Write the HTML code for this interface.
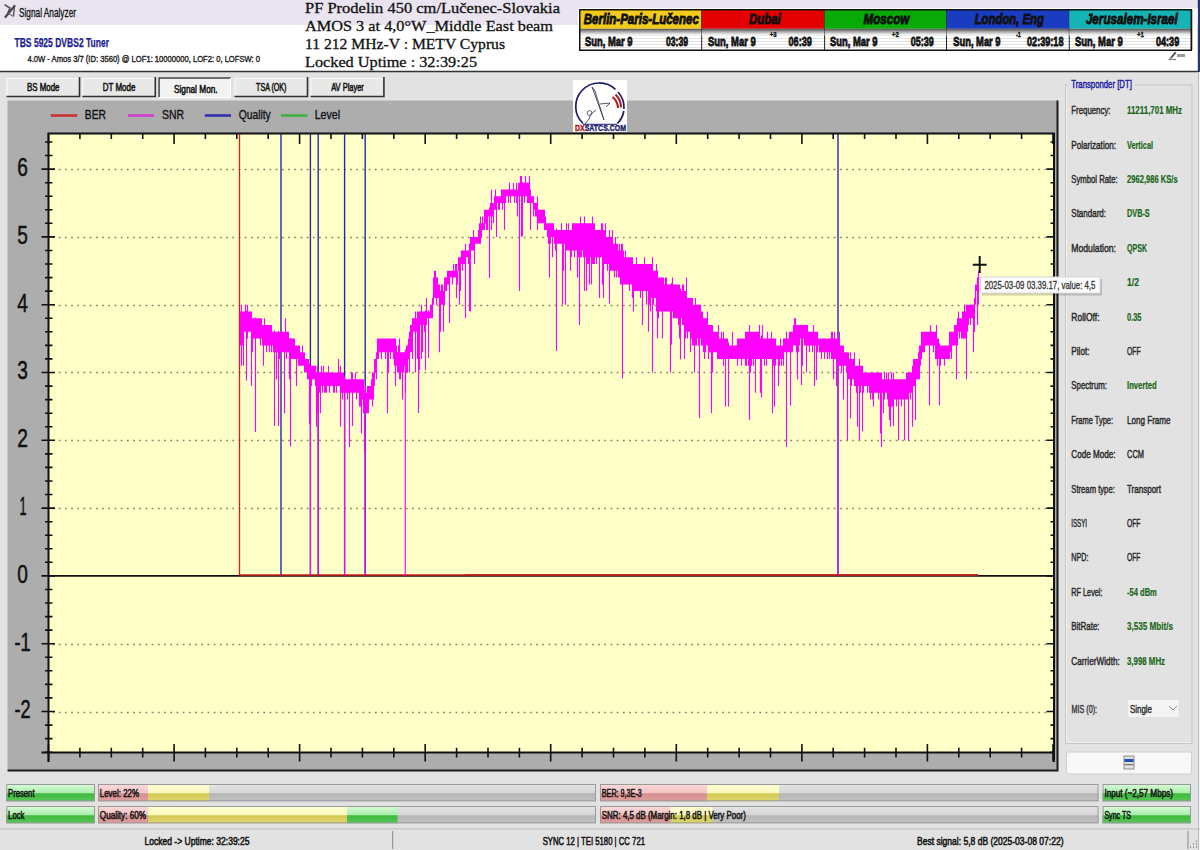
<!DOCTYPE html>
<html><head><meta charset="utf-8"><title>Signal Analyzer</title>
<style>html,body{margin:0;padding:0;width:1200px;height:850px;overflow:hidden;background:#e6e6e6;} svg{display:block;}</style>
</head><body>
<svg width="1200" height="850" viewBox="0 0 1200 850"><defs>
<linearGradient id="gGreen" x1="0" y1="0" x2="0" y2="1">
 <stop offset="0" stop-color="#dcfcdc"/><stop offset="0.52" stop-color="#a8eca8"/>
 <stop offset="0.56" stop-color="#40b840"/><stop offset="1" stop-color="#58c858"/></linearGradient>
<linearGradient id="gGray" x1="0" y1="0" x2="0" y2="1">
 <stop offset="0" stop-color="#e4e4e4"/><stop offset="0.52" stop-color="#d6d6d6"/>
 <stop offset="0.56" stop-color="#b6b6b6"/><stop offset="1" stop-color="#c2c2c2"/></linearGradient>
<linearGradient id="gRed" x1="0" y1="0" x2="0" y2="1">
 <stop offset="0" stop-color="#fcdcdc"/><stop offset="0.52" stop-color="#f2c2c2"/>
 <stop offset="0.56" stop-color="#d68e8e"/><stop offset="1" stop-color="#dea0a0"/></linearGradient>
<linearGradient id="gYel" x1="0" y1="0" x2="0" y2="1">
 <stop offset="0" stop-color="#ffffd4"/><stop offset="0.52" stop-color="#fbf8bc"/>
 <stop offset="0.56" stop-color="#d2c852"/><stop offset="1" stop-color="#e0d870"/></linearGradient>
<linearGradient id="gLGreen" x1="0" y1="0" x2="0" y2="1">
 <stop offset="0" stop-color="#dcfcdc"/><stop offset="0.52" stop-color="#a8eca8"/>
 <stop offset="0.56" stop-color="#40b840"/><stop offset="1" stop-color="#58c858"/></linearGradient>
<linearGradient id="gClock" x1="0" y1="0" x2="0" y2="1">
 <stop offset="0" stop-color="#505050"/><stop offset="0.35" stop-color="#9a9a9a"/>
 <stop offset="0.75" stop-color="#e6e6e6"/><stop offset="1" stop-color="#f8f8f8"/></linearGradient>
<pattern id="pStripe" width="4" height="3" patternUnits="userSpaceOnUse">
 <rect width="4" height="3" fill="#ffffff"/><rect y="2" width="4" height="1" fill="#e4e4e4"/></pattern>
</defs>
<rect x="0" y="0" width="1200" height="850" fill="#e2e2e2" />
<rect x="0" y="0" width="1200" height="25" fill="#e9e4f0" />
<rect x="0" y="25" width="1200" height="46" fill="#ffffff" />
<line x1="0" y1="71.5" x2="1200" y2="71.5" stroke="#333" stroke-width="1.5" />
<line x1="1198.5" y1="25" x2="1198.5" y2="850" stroke="#b4bccc" stroke-width="1" />
<rect x="1199" y="0" width="1" height="850" fill="#f4f4f8" />
<rect x="1197.8" y="0" width="2.2" height="72" fill="#2a3470" />
<rect x="1192" y="8" width="5.8" height="17" fill="#f6f4fa" />
<g fill="none" stroke="#555" stroke-linecap="round"><path d="M5 5 L10 8 L7 15" stroke-width="1.6"/><path d="M14.5 5.5 L13.5 16" stroke-width="1.4"/><path d="M5.5 17 L14.5 6" stroke-width="2.2" stroke="#4a4a4a"/><path d="M9 14 L13 16" stroke-width="1.2" stroke="#777"/></g>
<text x="19.00" y="16.5" font-size="12.5" font-weight="normal" font-style="normal" fill="#111" stroke="#111" stroke-width="0.3" font-family='"Liberation Sans", sans-serif' textLength="56.99" lengthAdjust="spacingAndGlyphs" >Signal Analyzer</text>
<text x="14.50" y="47.0" font-size="12" font-weight="bold" font-style="normal" fill="#1c1c90" stroke="#1c1c90" stroke-width="0.25" font-family='"Liberation Sans", sans-serif' textLength="94.51" lengthAdjust="spacingAndGlyphs" >TBS 5925 DVBS2 Tuner</text>
<text x="27.50" y="62.3" font-size="9.5" font-weight="normal" font-style="normal" fill="#222" stroke="#222" stroke-width="0.4" font-family='"Liberation Sans", sans-serif' textLength="232.51" lengthAdjust="spacingAndGlyphs" >4.0W - Amos 3/7 (ID: 3560) @ LOF1: 10000000, LOF2: 0, LOFSW: 0</text>
<text x="305.00" y="12.8" font-size="15" font-weight="normal" font-style="normal" fill="#111" stroke="#111" stroke-width="0.3" font-family='"Liberation Serif", serif' textLength="254.99" lengthAdjust="spacingAndGlyphs" >PF Prodelin 450 cm/Lučenec-Slovakia</text>
<text x="305.00" y="31.0" font-size="15" font-weight="normal" font-style="normal" fill="#111" stroke="#111" stroke-width="0.3" font-family='"Liberation Serif", serif' textLength="248.01" lengthAdjust="spacingAndGlyphs" >AMOS 3 at 4,0°W_Middle East beam</text>
<text x="305.00" y="49.3" font-size="15" font-weight="normal" font-style="normal" fill="#111" stroke="#111" stroke-width="0.3" font-family='"Liberation Serif", serif' textLength="200.04" lengthAdjust="spacingAndGlyphs" >11 212 MHz-V : METV Cyprus</text>
<text x="305.00" y="67.2" font-size="15" font-weight="normal" font-style="normal" fill="#111" stroke="#111" stroke-width="0.3" font-family='"Liberation Serif", serif' textLength="172.02" lengthAdjust="spacingAndGlyphs" >Locked Uptime : 32:39:25</text>
<rect x="578" y="8" width="615" height="43.5" fill="#ffffff" />
<rect x="579" y="9" width="613" height="41.5" fill="url(#pStripe)" />
<rect x="579.0" y="10" width="122.70000000000005" height="18.8" fill="#f2cc1c" />
<rect x="579.0" y="28.8" width="122.70000000000005" height="7" fill="url(#gClock)" />
<text x="583.80" y="23.5" font-size="14.5" font-weight="bold" font-style="italic" fill="#111" stroke="#111" stroke-width="0.9" font-family='"Liberation Sans", sans-serif' textLength="114.98" lengthAdjust="spacingAndGlyphs" >Berlin-Paris-Lučenec</text>
<text x="585.00" y="45.8" font-size="13.5" font-weight="bold" font-style="normal" fill="#111" stroke="#111" stroke-width="0.8" font-family='"Liberation Sans", sans-serif' textLength="47.52" lengthAdjust="spacingAndGlyphs" >Sun, Mar 9</text>
<text x="666.00" y="45.8" font-size="13.5" font-weight="bold" font-style="normal" fill="#111" stroke="#111" stroke-width="0.8" font-family='"Liberation Sans", sans-serif' textLength="21.98" lengthAdjust="spacingAndGlyphs" >03:39</text>
<line x1="701.7" y1="9.5" x2="701.7" y2="50" stroke="#222" stroke-width="1" />
<rect x="701.7" y="10" width="122.89999999999998" height="18.8" fill="#e40000" />
<rect x="701.7" y="28.8" width="122.89999999999998" height="7" fill="url(#gClock)" />
<text x="749.00" y="23.5" font-size="14.5" font-weight="bold" font-style="italic" fill="#111" stroke="#111" stroke-width="0.9" font-family='"Liberation Sans", sans-serif' textLength="31.80" lengthAdjust="spacingAndGlyphs" >Dubai</text>
<text x="708.00" y="45.8" font-size="13.5" font-weight="bold" font-style="normal" fill="#111" stroke="#111" stroke-width="0.8" font-family='"Liberation Sans", sans-serif' textLength="47.82" lengthAdjust="spacingAndGlyphs" >Sun, Mar 9</text>
<text x="788.50" y="45.8" font-size="13.5" font-weight="bold" font-style="normal" fill="#111" stroke="#111" stroke-width="0.8" font-family='"Liberation Sans", sans-serif' textLength="23.38" lengthAdjust="spacingAndGlyphs" >06:39</text>
<text x="769.80" y="37.0" font-size="8" font-weight="bold" font-style="normal" fill="#111" stroke="#111" stroke-width="0.4" font-family='"Liberation Sans", sans-serif' textLength="6.90" lengthAdjust="spacingAndGlyphs" >+3</text>
<line x1="824.6" y1="9.5" x2="824.6" y2="50" stroke="#222" stroke-width="1" />
<rect x="824.6" y="10" width="121.89999999999998" height="18.8" fill="#08aa08" />
<rect x="824.6" y="28.8" width="121.89999999999998" height="7" fill="url(#gClock)" />
<text x="863.50" y="23.5" font-size="14.5" font-weight="bold" font-style="italic" fill="#111" stroke="#111" stroke-width="0.9" font-family='"Liberation Sans", sans-serif' textLength="45.86" lengthAdjust="spacingAndGlyphs" >Moscow</text>
<text x="830.00" y="45.8" font-size="13.5" font-weight="bold" font-style="normal" fill="#111" stroke="#111" stroke-width="0.8" font-family='"Liberation Sans", sans-serif' textLength="47.52" lengthAdjust="spacingAndGlyphs" >Sun, Mar 9</text>
<text x="910.80" y="45.8" font-size="13.5" font-weight="bold" font-style="normal" fill="#111" stroke="#111" stroke-width="0.8" font-family='"Liberation Sans", sans-serif' textLength="22.98" lengthAdjust="spacingAndGlyphs" >05:39</text>
<text x="891.70" y="37.0" font-size="8" font-weight="bold" font-style="normal" fill="#111" stroke="#111" stroke-width="0.4" font-family='"Liberation Sans", sans-serif' textLength="7.30" lengthAdjust="spacingAndGlyphs" >+2</text>
<line x1="946.5" y1="9.5" x2="946.5" y2="50" stroke="#222" stroke-width="1" />
<rect x="946.5" y="10" width="122.79999999999995" height="18.8" fill="#1a3cc0" />
<rect x="946.5" y="28.8" width="122.79999999999995" height="7" fill="url(#gClock)" />
<text x="974.70" y="23.5" font-size="14.5" font-weight="bold" font-style="italic" fill="#111" stroke="#111" stroke-width="0.9" font-family='"Liberation Sans", sans-serif' textLength="69.29" lengthAdjust="spacingAndGlyphs" >London, Eng</text>
<text x="953.30" y="45.8" font-size="13.5" font-weight="bold" font-style="normal" fill="#111" stroke="#111" stroke-width="0.8" font-family='"Liberation Sans", sans-serif' textLength="47.22" lengthAdjust="spacingAndGlyphs" >Sun, Mar 9</text>
<text x="1027.00" y="45.8" font-size="13.5" font-weight="bold" font-style="normal" fill="#111" stroke="#111" stroke-width="0.8" font-family='"Liberation Sans", sans-serif' textLength="36.48" lengthAdjust="spacingAndGlyphs" >02:39:18</text>
<text x="1016.00" y="37.0" font-size="8" font-weight="bold" font-style="normal" fill="#111" stroke="#111" stroke-width="0.4" font-family='"Liberation Sans", sans-serif' textLength="5.00" lengthAdjust="spacingAndGlyphs" >-1</text>
<line x1="1069.3" y1="9.5" x2="1069.3" y2="50" stroke="#222" stroke-width="1" />
<rect x="1069.3" y="10" width="122.5" height="18.8" fill="#14b4b4" />
<rect x="1069.3" y="28.8" width="122.5" height="7" fill="url(#gClock)" />
<text x="1085.90" y="23.5" font-size="14.5" font-weight="bold" font-style="italic" fill="#111" stroke="#111" stroke-width="0.9" font-family='"Liberation Sans", sans-serif' textLength="91.92" lengthAdjust="spacingAndGlyphs" >Jerusalem-Israel</text>
<text x="1075.00" y="45.8" font-size="13.5" font-weight="bold" font-style="normal" fill="#111" stroke="#111" stroke-width="0.8" font-family='"Liberation Sans", sans-serif' textLength="47.72" lengthAdjust="spacingAndGlyphs" >Sun, Mar 9</text>
<text x="1156.00" y="45.8" font-size="13.5" font-weight="bold" font-style="normal" fill="#111" stroke="#111" stroke-width="0.8" font-family='"Liberation Sans", sans-serif' textLength="23.18" lengthAdjust="spacingAndGlyphs" >04:39</text>
<text x="1137.00" y="37.0" font-size="8" font-weight="bold" font-style="normal" fill="#111" stroke="#111" stroke-width="0.4" font-family='"Liberation Sans", sans-serif' textLength="7.00" lengthAdjust="spacingAndGlyphs" >+1</text>
<line x1="1191.8" y1="9.5" x2="1191.8" y2="50" stroke="#222" stroke-width="1" />
<rect x="579.75" y="9.75" width="611.5" height="40.5" fill="none" stroke="#111" stroke-width="1.5"/>
<path d="M1169 59 L1175 51.5 L1176.5 53 L1172 58 Z" fill="#555"/><path d="M1168.5 59.5 H1176" stroke="#777" stroke-width="1.2"/><rect x="1177" y="54" width="8" height="3" fill="#999"/>
<rect x="6.5" y="78" width="73.5" height="19" fill="#e8e8e8" />
<path d="M6.5 78.5 H79 M7.0 78 V96" fill="none" stroke="#fafafa" stroke-width="1"/>
<path d="M6.5 96.5 H79.5 V77" fill="none" stroke="#333" stroke-width="1.6"/>
<text x="26.95" y="91.3" font-size="11" font-weight="normal" font-style="normal" fill="#111" stroke="#111" stroke-width="0.55" font-family='"Liberation Sans", sans-serif' textLength="32.59" lengthAdjust="spacingAndGlyphs" >BS Mode</text>
<rect x="82.4" y="78" width="73.4" height="19" fill="#e8e8e8" />
<path d="M82.4 78.5 H154.8 M82.9 78 V96" fill="none" stroke="#fafafa" stroke-width="1"/>
<path d="M82.4 96.5 H155.3 V77" fill="none" stroke="#333" stroke-width="1.6"/>
<text x="102.75" y="91.3" font-size="11" font-weight="normal" font-style="normal" fill="#111" stroke="#111" stroke-width="0.55" font-family='"Liberation Sans", sans-serif' textLength="32.70" lengthAdjust="spacingAndGlyphs" >DT Mode</text>
<rect x="158.6" y="77.5" width="72.4" height="20" fill="#f2f2f2" />
<path d="M159.1 97.5 V78 H231" fill="none" stroke="#444" stroke-width="1.5"/>
<path d="M230.5 78 V97.5 H158.6" fill="none" stroke="#fff" stroke-width="1"/>
<text x="173.95" y="93.0" font-size="11" font-weight="normal" font-style="normal" fill="#111" stroke="#111" stroke-width="0.55" font-family='"Liberation Sans", sans-serif' textLength="43.71" lengthAdjust="spacingAndGlyphs" >Signal Mon.</text>
<rect x="234.5" y="78" width="73.5" height="19" fill="#e8e8e8" />
<path d="M234.5 78.5 H307 M235.0 78 V96" fill="none" stroke="#fafafa" stroke-width="1"/>
<path d="M234.5 96.5 H307.5 V77" fill="none" stroke="#333" stroke-width="1.6"/>
<text x="256.10" y="91.3" font-size="11" font-weight="normal" font-style="normal" fill="#111" stroke="#111" stroke-width="0.55" font-family='"Liberation Sans", sans-serif' textLength="30.29" lengthAdjust="spacingAndGlyphs" >TSA (OK)</text>
<rect x="310.6" y="78" width="73.79999999999995" height="19" fill="#e8e8e8" />
<path d="M310.6 78.5 H383.4 M311.1 78 V96" fill="none" stroke="#fafafa" stroke-width="1"/>
<path d="M310.6 96.5 H383.9 V77" fill="none" stroke="#333" stroke-width="1.6"/>
<text x="331.15" y="91.3" font-size="11" font-weight="normal" font-style="normal" fill="#111" stroke="#111" stroke-width="0.55" font-family='"Liberation Sans", sans-serif' textLength="32.72" lengthAdjust="spacingAndGlyphs" >AV Player</text>
<rect x="7.5" y="100.5" width="1050" height="669.5" fill="#adadad" />
<path d="M1057.5 100.5 V770.5 H7.5" fill="none" stroke="#1a1a1a" stroke-width="2"/>
<line x1="50.7" y1="115.5" x2="77.3" y2="115.5" stroke="#c83232" stroke-width="2.6" />
<text x="84.80" y="119.3" font-size="13" font-weight="normal" font-style="normal" fill="#111" stroke="#111" stroke-width="0.35" font-family='"Liberation Sans", sans-serif' textLength="21.21" lengthAdjust="spacingAndGlyphs" >BER</text>
<line x1="128" y1="115.5" x2="154" y2="115.5" stroke="#d040d0" stroke-width="2.6" />
<text x="162.00" y="119.3" font-size="13" font-weight="normal" font-style="normal" fill="#111" stroke="#111" stroke-width="0.35" font-family='"Liberation Sans", sans-serif' textLength="22.01" lengthAdjust="spacingAndGlyphs" >SNR</text>
<line x1="204.8" y1="115.5" x2="231" y2="115.5" stroke="#3030b0" stroke-width="2.6" />
<text x="238.70" y="119.3" font-size="13" font-weight="normal" font-style="normal" fill="#111" stroke="#111" stroke-width="0.35" font-family='"Liberation Sans", sans-serif' textLength="32.02" lengthAdjust="spacingAndGlyphs" >Quality</text>
<line x1="281" y1="115.5" x2="307.5" y2="115.5" stroke="#40b040" stroke-width="2.6" />
<text x="314.70" y="119.3" font-size="13" font-weight="normal" font-style="normal" fill="#111" stroke="#111" stroke-width="0.35" font-family='"Liberation Sans", sans-serif' textLength="25.31" lengthAdjust="spacingAndGlyphs" >Level</text>
<rect x="48.5" y="133.5" width="1005.5" height="618.9" fill="#ffffc8" />
<line x1="52.5" y1="169.5" x2="1048" y2="169.5" stroke="#86866c" stroke-width="1.6" stroke-dasharray="1.8 4.4"/>
<line x1="52.5" y1="237.5" x2="1048" y2="237.5" stroke="#86866c" stroke-width="1.6" stroke-dasharray="1.8 4.4"/>
<line x1="52.5" y1="305.5" x2="1048" y2="305.5" stroke="#86866c" stroke-width="1.6" stroke-dasharray="1.8 4.4"/>
<line x1="52.5" y1="372.5" x2="1048" y2="372.5" stroke="#86866c" stroke-width="1.6" stroke-dasharray="1.8 4.4"/>
<line x1="52.5" y1="440.5" x2="1048" y2="440.5" stroke="#86866c" stroke-width="1.6" stroke-dasharray="1.8 4.4"/>
<line x1="52.5" y1="508.5" x2="1048" y2="508.5" stroke="#86866c" stroke-width="1.6" stroke-dasharray="1.8 4.4"/>
<line x1="52.5" y1="644.5" x2="1048" y2="644.5" stroke="#86866c" stroke-width="1.6" stroke-dasharray="1.8 4.4"/>
<line x1="52.5" y1="712.5" x2="1048" y2="712.5" stroke="#86866c" stroke-width="1.6" stroke-dasharray="1.8 4.4"/>
<text x="17.30" y="175.9" font-size="25.5" font-weight="normal" font-style="normal" fill="#111" stroke="#111" stroke-width="0.5" font-family='"Liberation Sans", sans-serif' textLength="10.62" lengthAdjust="spacingAndGlyphs" >6</text>
<text x="17.30" y="243.7" font-size="25.5" font-weight="normal" font-style="normal" fill="#111" stroke="#111" stroke-width="0.5" font-family='"Liberation Sans", sans-serif' textLength="10.62" lengthAdjust="spacingAndGlyphs" >5</text>
<text x="17.30" y="311.5" font-size="25.5" font-weight="normal" font-style="normal" fill="#111" stroke="#111" stroke-width="0.5" font-family='"Liberation Sans", sans-serif' textLength="10.62" lengthAdjust="spacingAndGlyphs" >4</text>
<text x="17.30" y="379.3" font-size="25.5" font-weight="normal" font-style="normal" fill="#111" stroke="#111" stroke-width="0.5" font-family='"Liberation Sans", sans-serif' textLength="10.62" lengthAdjust="spacingAndGlyphs" >3</text>
<text x="17.30" y="447.1" font-size="25.5" font-weight="normal" font-style="normal" fill="#111" stroke="#111" stroke-width="0.5" font-family='"Liberation Sans", sans-serif' textLength="10.62" lengthAdjust="spacingAndGlyphs" >2</text>
<text x="19.50" y="514.9" font-size="25.5" font-weight="normal" font-style="normal" fill="#111" stroke="#111" stroke-width="0.5" font-family='"Liberation Sans", sans-serif' textLength="7.01" lengthAdjust="spacingAndGlyphs" >1</text>
<text x="17.30" y="582.7" font-size="25.5" font-weight="normal" font-style="normal" fill="#111" stroke="#111" stroke-width="0.5" font-family='"Liberation Sans", sans-serif' textLength="10.62" lengthAdjust="spacingAndGlyphs" >0</text>
<text x="14.50" y="650.5" font-size="25.5" font-weight="normal" font-style="normal" fill="#111" stroke="#111" stroke-width="0.5" font-family='"Liberation Sans", sans-serif' textLength="16.19" lengthAdjust="spacingAndGlyphs" >-1</text>
<text x="14.50" y="718.3" font-size="25.5" font-weight="normal" font-style="normal" fill="#111" stroke="#111" stroke-width="0.5" font-family='"Liberation Sans", sans-serif' textLength="16.19" lengthAdjust="spacingAndGlyphs" >-2</text>
<path d="M45 752.2 H52.5 M1050.5 752.2 H1054 M45 738.6 H52.5 M1050.5 738.6 H1054 M45 725.1 H52.5 M1050.5 725.1 H1054 M41.5 711.5 H55 M1046.5 711.5 H1054 M45 697.9 H52.5 M1050.5 697.9 H1054 M45 684.4 H52.5 M1050.5 684.4 H1054 M45 670.8 H52.5 M1050.5 670.8 H1054 M45 657.3 H52.5 M1050.5 657.3 H1054 M41.5 643.7 H55 M1046.5 643.7 H1054 M45 630.1 H52.5 M1050.5 630.1 H1054 M45 616.6 H52.5 M1050.5 616.6 H1054 M45 603.0 H52.5 M1050.5 603.0 H1054 M45 589.5 H52.5 M1050.5 589.5 H1054 M41.5 575.9 H55 M1046.5 575.9 H1054 M45 562.3 H52.5 M1050.5 562.3 H1054 M45 548.8 H52.5 M1050.5 548.8 H1054 M45 535.2 H52.5 M1050.5 535.2 H1054 M45 521.7 H52.5 M1050.5 521.7 H1054 M41.5 508.1 H55 M1046.5 508.1 H1054 M45 494.5 H52.5 M1050.5 494.5 H1054 M45 481.0 H52.5 M1050.5 481.0 H1054 M45 467.4 H52.5 M1050.5 467.4 H1054 M45 453.9 H52.5 M1050.5 453.9 H1054 M41.5 440.3 H55 M1046.5 440.3 H1054 M45 426.7 H52.5 M1050.5 426.7 H1054 M45 413.2 H52.5 M1050.5 413.2 H1054 M45 399.6 H52.5 M1050.5 399.6 H1054 M45 386.1 H52.5 M1050.5 386.1 H1054 M41.5 372.5 H55 M1046.5 372.5 H1054 M45 358.9 H52.5 M1050.5 358.9 H1054 M45 345.4 H52.5 M1050.5 345.4 H1054 M45 331.8 H52.5 M1050.5 331.8 H1054 M45 318.3 H52.5 M1050.5 318.3 H1054 M41.5 304.7 H55 M1046.5 304.7 H1054 M45 291.1 H52.5 M1050.5 291.1 H1054 M45 277.6 H52.5 M1050.5 277.6 H1054 M45 264.0 H52.5 M1050.5 264.0 H1054 M45 250.5 H52.5 M1050.5 250.5 H1054 M41.5 236.9 H55 M1046.5 236.9 H1054 M45 223.3 H52.5 M1050.5 223.3 H1054 M45 209.8 H52.5 M1050.5 209.8 H1054 M45 196.2 H52.5 M1050.5 196.2 H1054 M45 182.7 H52.5 M1050.5 182.7 H1054 M41.5 169.1 H55 M1046.5 169.1 H1054 M45 155.5 H52.5 M1050.5 155.5 H1054 M45 142.0 H52.5 M1050.5 142.0 H1054 M48.5 744 V761.5 M48.5 133 V144 M79.9 747.7 V757.6 M79.9 133 V139 M111.3 747.7 V757.6 M111.3 133 V139 M142.7 747.7 V757.6 M142.7 133 V139 M174.1 744 V761.5 M174.1 133 V144 M205.4 747.7 V757.6 M205.4 133 V139 M236.8 747.7 V757.6 M236.8 133 V139 M268.2 747.7 V757.6 M268.2 133 V139 M299.6 744 V761.5 M299.6 133 V144 M331.0 747.7 V757.6 M331.0 133 V139 M362.4 747.7 V757.6 M362.4 133 V139 M393.8 747.7 V757.6 M393.8 133 V139 M425.2 744 V761.5 M425.2 133 V144 M456.6 747.7 V757.6 M456.6 133 V139 M488.0 747.7 V757.6 M488.0 133 V139 M519.4 747.7 V757.6 M519.4 133 V139 M550.7 744 V761.5 M550.7 133 V144 M582.1 747.7 V757.6 M582.1 133 V139 M613.5 747.7 V757.6 M613.5 133 V139 M644.9 747.7 V757.6 M644.9 133 V139 M676.3 744 V761.5 M676.3 133 V144 M707.7 747.7 V757.6 M707.7 133 V139 M739.1 747.7 V757.6 M739.1 133 V139 M770.5 747.7 V757.6 M770.5 133 V139 M801.9 744 V761.5 M801.9 133 V144 M833.2 747.7 V757.6 M833.2 133 V139 M864.6 747.7 V757.6 M864.6 133 V139 M896.0 747.7 V757.6 M896.0 133 V139 M927.4 744 V761.5 M927.4 133 V144 M958.8 747.7 V757.6 M958.8 133 V139 M990.2 747.7 V757.6 M990.2 133 V139 M1021.6 747.7 V757.6 M1021.6 133 V139 M1053.0 744 V761.5 M1053.0 133 V144" stroke="#111" stroke-width="1.6" fill="none"/>
<path d="M48.5 762 V133.5 H1054 V762" fill="none" stroke="#111" stroke-width="2"/>
<line x1="41.5" y1="752.4" x2="1054" y2="752.4" stroke="#111" stroke-width="2" />
<line x1="48.5" y1="575.9" x2="1054" y2="575.9" stroke="#111" stroke-width="1.8" />
<g>
<rect x="573" y="80" width="54" height="52" fill="#ffffff"/>
<path d="M583 123.5 A23.5 23.5 0 1 1 615.5 89.5" fill="none" stroke="#1c1c6c" stroke-width="1.7"/>
<path d="M618 92 A23.5 23.5 0 0 1 624 109" fill="none" stroke="#1c1c6c" stroke-width="1.7"/>
<path d="M623.8 111 A23.5 23.5 0 0 1 617.5 123.5" fill="none" stroke="#1c1c6c" stroke-width="1.7"/>
<path d="M612.5 97 A15 15 0 0 1 618 108 M615.5 94.5 A18 18 0 0 1 621 107.5" fill="none" stroke="#b01818" stroke-width="2"/>
<path d="M592 87 L604 120 L595 91 Z" fill="#dde" stroke="#334" stroke-width="0.8"/>
<path d="M600 104 L610 103 L606 107" fill="none" stroke="#445" stroke-width="0.9"/>
<path d="M585 124 Q590 119 591 114 L596 110" fill="none" stroke="#556" stroke-width="1"/>
<circle cx="589.5" cy="113" r="2.4" fill="none" stroke="#556" stroke-width="0.9"/>
<path d="M583 124.3 H617" stroke="#1c1c6c" stroke-width="1"/>
<text x="575" y="131" font-size="8.5" font-weight="bold" font-family='"Liberation Sans", sans-serif' fill="#1c1c6c" stroke="#1c1c6c" stroke-width="0.4" textLength="51" lengthAdjust="spacingAndGlyphs"><tspan fill="#b01818" stroke="#b01818">DX</tspan>SATCS.COM</text>
</g>
<path d="M281 134V575M310.4 134V575M318.2 134V575M344.6 134V575M365.2 134V575M838 134V575" stroke="#2828a8" stroke-width="1.4" fill="none"/><path d="M239.5 134V575 M239.5 575 H978" stroke="#d02020" stroke-width="1.3" fill="none"/><path d="M240.5 311.5V345.4M241.5 304.7V365.7M242.5 311.5V345.4M243.5 311.5V365.7M244.5 311.5V331.8M245.5 304.7V331.8M246.5 311.5V331.8M247.5 304.7V338.6M248.5 311.5V331.8M249.5 311.5V331.8M250.5 311.5V331.8M251.5 311.5V386.1M252.5 318.3V352.2M253.5 318.3V338.6M254.5 318.3V338.6M255.5 318.3V338.6M256.5 318.3V338.6M257.5 318.3V338.6M258.5 318.3V338.6M259.5 318.3V338.6M260.5 318.3V345.4M261.5 318.3V338.6M262.5 325.0V345.4M263.5 325.0V365.7M264.5 318.3V345.4M265.5 325.0V345.4M266.5 325.0V352.2M267.5 325.0V345.4M268.5 325.0V345.4M269.5 325.0V352.2M270.5 325.0V345.4M271.5 325.0V352.2M272.5 331.8V345.4M273.5 331.8V352.2M274.5 331.8V352.2M275.5 331.8V352.2M276.5 331.8V379.3M277.5 331.8V352.2M278.5 331.8V352.2M279.5 331.8V358.9M280.5 331.8V352.2M281.5 331.8V352.2M282.5 331.8V352.2M283.5 331.8V352.2M284.5 331.8V413.2M285.5 318.3V352.2M286.5 331.8V358.9M287.5 331.8V352.2M288.5 331.8V352.2M289.5 338.6V379.3M290.5 338.6V365.7M291.5 338.6V358.9M292.5 338.6V358.9M293.5 338.6V358.9M294.5 338.6V358.9M295.5 345.4V358.9M296.5 345.4V386.1M297.5 345.4V358.9M298.5 345.4V365.7M299.5 345.4V365.7M300.5 352.2V365.7M301.5 352.2V365.7M302.5 345.4V365.7M303.5 352.2V365.7M304.5 352.2V372.5M305.5 358.9V372.5M306.5 358.9V372.5M307.5 358.9V379.3M308.5 358.9V379.3M309.5 365.7V386.1M310.5 365.7V379.3M311.5 365.7V386.1M312.5 365.7V379.3M313.5 365.7V379.3M314.5 365.7V379.3M315.5 365.7V386.1M316.5 372.5V426.7M317.5 365.7V413.2M318.5 372.5V386.1M319.5 372.5V392.8M320.5 372.5V413.2M321.5 365.7V386.1M322.5 372.5V392.8M323.5 365.7V386.1M324.5 372.5V392.8M325.5 372.5V392.8M326.5 372.5V392.8M327.5 372.5V386.1M328.5 365.7V386.1M329.5 372.5V392.8M330.5 372.5V386.1M331.5 372.5V386.1M332.5 372.5V386.1M333.5 372.5V392.8M334.5 372.5V392.8M335.5 372.5V386.1M336.5 372.5V392.8M337.5 372.5V386.1M338.5 358.9V386.1M339.5 372.5V386.1M340.5 365.7V426.7M341.5 372.5V392.8M342.5 372.5V399.6M343.5 372.5V392.8M344.5 379.3V392.8M345.5 379.3V392.8M346.5 379.3V392.8M347.5 379.3V399.6M348.5 379.3V392.8M349.5 379.3V447.1M350.5 379.3V392.8M351.5 372.5V392.8M352.5 372.5V392.8M353.5 379.3V392.8M354.5 379.3V392.8M355.5 372.5V392.8M356.5 379.3V399.6M357.5 379.3V392.8M358.5 379.3V392.8M359.5 379.3V406.4M360.5 379.3V406.4M361.5 379.3V433.5M362.5 379.3V399.6M363.5 379.3V413.2M364.5 392.8V406.4M365.5 386.1V406.4M366.5 392.8V413.2M367.5 386.1V413.2M368.5 386.1V413.2M369.5 386.1V399.6M370.5 386.1V399.6M371.5 379.3V399.6M372.5 372.5V406.4M373.5 372.5V399.6M374.5 358.9V386.1M375.5 358.9V372.5M376.5 352.2V379.3M377.5 338.6V358.9M378.5 338.6V358.9M379.5 338.6V352.2M380.5 338.6V352.2M381.5 338.6V358.9M382.5 338.6V352.2M383.5 338.6V352.2M384.5 338.6V352.2M385.5 338.6V358.9M386.5 338.6V352.2M387.5 338.6V413.2M388.5 338.6V372.5M389.5 338.6V352.2M390.5 338.6V358.9M391.5 338.6V352.2M392.5 338.6V352.2M393.5 338.6V358.9M394.5 338.6V365.7M395.5 338.6V372.5M396.5 345.4V365.7M397.5 352.2V372.5M398.5 345.4V372.5M399.5 338.6V379.3M400.5 352.2V379.3M401.5 352.2V372.5M402.5 352.2V399.6M403.5 352.2V372.5M404.5 352.2V365.7M405.5 352.2V392.8M406.5 345.4V372.5M407.5 345.4V372.5M408.5 338.6V358.9M409.5 331.8V372.5M410.5 325.0V352.2M411.5 325.0V352.2M412.5 318.3V358.9M413.5 318.3V331.8M414.5 318.3V331.8M415.5 311.5V372.5M416.5 318.3V331.8M417.5 311.5V358.9M418.5 311.5V325.0M419.5 311.5V325.0M420.5 311.5V325.0M421.5 304.7V358.9M422.5 311.5V352.2M423.5 311.5V325.0M424.5 311.5V331.8M425.5 311.5V325.0M426.5 297.9V325.0M427.5 311.5V318.3M428.5 311.5V318.3M429.5 311.5V318.3M430.5 304.7V318.3M431.5 304.7V318.3M432.5 297.9V318.3M433.5 277.6V304.7M434.5 270.8V297.9M435.5 270.8V297.9M436.5 277.6V304.7M437.5 277.6V297.9M438.5 284.4V297.9M439.5 284.4V352.2M440.5 291.1V331.8M441.5 284.4V304.7M442.5 284.4V304.7M443.5 291.1V331.8M444.5 277.6V304.7M445.5 277.6V291.1M446.5 277.6V291.1M447.5 270.8V284.4M448.5 270.8V284.4M449.5 270.8V277.6M450.5 270.8V277.6M451.5 270.8V277.6M452.5 270.8V284.4M453.5 264.0V277.6M454.5 270.8V277.6M455.5 264.0V277.6M456.5 264.0V277.6M457.5 270.8V284.4M458.5 257.2V270.8M459.5 257.2V304.7M460.5 257.2V291.1M461.5 250.5V264.0M462.5 250.5V270.8M463.5 250.5V264.0M464.5 250.5V264.0M465.5 243.7V318.3M466.5 250.5V257.2M467.5 250.5V257.2M468.5 250.5V264.0M469.5 243.7V257.2M470.5 236.9V311.5M471.5 236.9V250.5M472.5 236.9V250.5M473.5 230.1V250.5M474.5 236.9V264.0M475.5 236.9V243.7M476.5 236.9V243.7M477.5 236.9V243.7M478.5 230.1V243.7M479.5 223.3V243.7M480.5 216.6V243.7M481.5 223.3V236.9M482.5 216.6V230.1M483.5 223.3V230.1M484.5 209.8V230.1M485.5 209.8V223.3M486.5 209.8V230.1M487.5 209.8V230.1M488.5 209.8V216.6M489.5 209.8V216.6M490.5 203.0V216.6M491.5 189.4V230.1M492.5 203.0V216.6M493.5 203.0V223.3M494.5 196.2V209.8M495.5 189.4V209.8M496.5 196.2V236.9M497.5 196.2V203.0M498.5 196.2V209.8M499.5 196.2V209.8M500.5 196.2V203.0M501.5 189.4V203.0M502.5 189.4V209.8M503.5 189.4V203.0M504.5 189.4V230.1M505.5 189.4V203.0M506.5 189.4V196.2M507.5 189.4V196.2M508.5 189.4V203.0M509.5 182.7V196.2M510.5 189.4V203.0M511.5 189.4V196.2M512.5 189.4V196.2M513.5 182.7V196.2M514.5 189.4V203.0M515.5 189.4V196.2M516.5 182.7V203.0M517.5 189.4V216.6M518.5 182.7V196.2M519.5 182.7V196.2M520.5 175.9V196.2M521.5 175.9V236.9M522.5 182.7V223.3M523.5 182.7V196.2M524.5 182.7V203.0M525.5 175.9V196.2M526.5 182.7V196.2M527.5 182.7V203.0M528.5 182.7V203.0M529.5 175.9V203.0M530.5 189.4V230.1M531.5 196.2V203.0M532.5 196.2V203.0M533.5 196.2V216.6M534.5 203.0V209.8M535.5 203.0V216.6M536.5 203.0V216.6M537.5 196.2V230.1M538.5 209.8V223.3M539.5 209.8V223.3M540.5 209.8V223.3M541.5 209.8V223.3M542.5 209.8V223.3M543.5 209.8V223.3M544.5 209.8V230.1M545.5 216.6V230.1M546.5 223.3V230.1M547.5 223.3V236.9M548.5 223.3V243.7M549.5 223.3V277.6M550.5 223.3V243.7M551.5 223.3V236.9M552.5 223.3V257.2M553.5 223.3V236.9M554.5 230.1V243.7M555.5 230.1V250.5M556.5 230.1V250.5M557.5 230.1V243.7M558.5 230.1V243.7M559.5 230.1V243.7M560.5 230.1V243.7M561.5 223.3V243.7M562.5 230.1V304.7M563.5 230.1V270.8M564.5 230.1V243.7M565.5 230.1V304.7M566.5 223.3V250.5M567.5 230.1V250.5M568.5 223.3V250.5M569.5 230.1V250.5M570.5 230.1V270.8M571.5 230.1V257.2M572.5 223.3V250.5M573.5 223.3V250.5M574.5 223.3V257.2M575.5 223.3V250.5M576.5 223.3V250.5M577.5 223.3V277.6M578.5 223.3V257.2M579.5 223.3V257.2M580.5 216.6V257.2M581.5 223.3V257.2M582.5 223.3V250.5M583.5 223.3V257.2M584.5 216.6V257.2M585.5 223.3V257.2M586.5 223.3V291.1M587.5 223.3V264.0M588.5 223.3V264.0M589.5 223.3V284.4M590.5 223.3V257.2M591.5 223.3V284.4M592.5 216.6V264.0M593.5 223.3V264.0M594.5 223.3V264.0M595.5 230.1V257.2M596.5 230.1V264.0M597.5 230.1V257.2M598.5 230.1V257.2M599.5 230.1V297.9M600.5 230.1V257.2M601.5 223.3V257.2M602.5 223.3V284.4M603.5 230.1V297.9M604.5 230.1V264.0M605.5 223.3V264.0M606.5 236.9V264.0M607.5 236.9V270.8M608.5 236.9V264.0M609.5 230.1V270.8M610.5 236.9V270.8M611.5 236.9V270.8M612.5 230.1V270.8M613.5 243.7V270.8M614.5 243.7V277.6M615.5 236.9V270.8M616.5 243.7V277.6M617.5 243.7V270.8M618.5 250.5V277.6M619.5 243.7V277.6M620.5 250.5V284.4M621.5 243.7V284.4M622.5 243.7V277.6M623.5 250.5V284.4M624.5 257.2V284.4M625.5 250.5V284.4M626.5 257.2V284.4M627.5 257.2V284.4M628.5 257.2V284.4M629.5 257.2V291.1M630.5 257.2V284.4M631.5 257.2V284.4M632.5 257.2V297.9M633.5 264.0V311.5M634.5 264.0V291.1M635.5 264.0V291.1M636.5 257.2V291.1M637.5 264.0V291.1M638.5 264.0V291.1M639.5 264.0V291.1M640.5 264.0V297.9M641.5 264.0V291.1M642.5 264.0V325.0M643.5 264.0V291.1M644.5 257.2V291.1M645.5 264.0V291.1M646.5 264.0V304.7M647.5 264.0V291.1M648.5 264.0V331.8M649.5 264.0V304.7M650.5 264.0V311.5M651.5 264.0V297.9M652.5 257.2V297.9M653.5 270.8V304.7M654.5 270.8V297.9M655.5 270.8V297.9M656.5 264.0V311.5M657.5 270.8V338.6M658.5 277.6V318.3M659.5 277.6V311.5M660.5 277.6V311.5M661.5 277.6V311.5M662.5 277.6V338.6M663.5 277.6V311.5M664.5 284.4V311.5M665.5 277.6V311.5M666.5 277.6V311.5M667.5 284.4V311.5M668.5 284.4V311.5M669.5 284.4V311.5M670.5 284.4V372.5M671.5 284.4V311.5M672.5 277.6V311.5M673.5 284.4V318.3M674.5 284.4V318.3M675.5 284.4V318.3M676.5 284.4V318.3M677.5 284.4V318.3M678.5 284.4V325.0M679.5 284.4V338.6M680.5 291.1V318.3M681.5 291.1V318.3M682.5 284.4V325.0M683.5 284.4V325.0M684.5 291.1V358.9M685.5 291.1V338.6M686.5 277.6V331.8M687.5 297.9V338.6M688.5 297.9V331.8M689.5 297.9V331.8M690.5 297.9V352.2M691.5 297.9V338.6M692.5 297.9V345.4M693.5 304.7V345.4M694.5 304.7V372.5M695.5 297.9V345.4M696.5 304.7V345.4M697.5 304.7V338.6M698.5 304.7V345.4M699.5 304.7V338.6M700.5 304.7V338.6M701.5 311.5V345.4M702.5 311.5V345.4M703.5 318.3V352.2M704.5 318.3V358.9M705.5 318.3V352.2M706.5 318.3V345.4M707.5 311.5V345.4M708.5 325.0V358.9M709.5 325.0V352.2M710.5 325.0V352.2M711.5 325.0V413.2M712.5 325.0V372.5M713.5 331.8V352.2M714.5 331.8V352.2M715.5 331.8V352.2M716.5 331.8V352.2M717.5 331.8V358.9M718.5 325.0V358.9M719.5 338.6V358.9M720.5 338.6V358.9M721.5 331.8V358.9M722.5 338.6V358.9M723.5 331.8V365.7M724.5 338.6V358.9M725.5 338.6V358.9M726.5 338.6V358.9M727.5 338.6V358.9M728.5 345.4V365.7M729.5 345.4V358.9M730.5 345.4V358.9M731.5 345.4V358.9M732.5 331.8V358.9M733.5 345.4V358.9M734.5 345.4V358.9M735.5 345.4V358.9M736.5 345.4V358.9M737.5 338.6V365.7M738.5 338.6V358.9M739.5 338.6V358.9M740.5 338.6V358.9M741.5 338.6V365.7M742.5 338.6V358.9M743.5 338.6V358.9M744.5 338.6V358.9M745.5 331.8V365.7M746.5 331.8V365.7M747.5 331.8V358.9M748.5 331.8V365.7M749.5 325.0V420.0M750.5 331.8V372.5M751.5 331.8V365.7M752.5 331.8V358.9M753.5 331.8V365.7M754.5 331.8V358.9M755.5 331.8V392.8M756.5 331.8V358.9M757.5 331.8V358.9M758.5 331.8V358.9M759.5 325.0V358.9M760.5 338.6V392.8M761.5 338.6V358.9M762.5 325.0V358.9M763.5 338.6V358.9M764.5 338.6V365.7M765.5 338.6V358.9M766.5 338.6V365.7M767.5 331.8V358.9M768.5 338.6V358.9M769.5 338.6V358.9M770.5 338.6V358.9M771.5 331.8V358.9M772.5 338.6V413.2M773.5 338.6V365.7M774.5 338.6V358.9M775.5 338.6V365.7M776.5 345.4V358.9M777.5 345.4V358.9M778.5 345.4V386.1M779.5 345.4V365.7M780.5 338.6V358.9M781.5 345.4V365.7M782.5 345.4V358.9M783.5 338.6V365.7M784.5 338.6V352.2M785.5 338.6V352.2M786.5 331.8V352.2M787.5 338.6V352.2M788.5 338.6V352.2M789.5 331.8V352.2M790.5 331.8V352.2M791.5 331.8V352.2M792.5 331.8V352.2M793.5 325.0V345.4M794.5 318.3V345.4M795.5 318.3V345.4M796.5 325.0V352.2M797.5 325.0V379.3M798.5 325.0V352.2M799.5 325.0V345.4M800.5 325.0V338.6M801.5 325.0V338.6M802.5 325.0V365.7M803.5 325.0V338.6M804.5 325.0V345.4M805.5 325.0V345.4M806.5 325.0V372.5M807.5 325.0V345.4M808.5 331.8V345.4M809.5 331.8V352.2M810.5 331.8V345.4M811.5 331.8V345.4M812.5 331.8V352.2M813.5 325.0V345.4M814.5 331.8V386.1M815.5 331.8V345.4M816.5 331.8V345.4M817.5 331.8V352.2M818.5 338.6V345.4M819.5 338.6V352.2M820.5 338.6V352.2M821.5 338.6V358.9M822.5 338.6V352.2M823.5 338.6V352.2M824.5 338.6V358.9M825.5 338.6V352.2M826.5 338.6V352.2M827.5 338.6V358.9M828.5 338.6V352.2M829.5 338.6V358.9M830.5 338.6V352.2M831.5 331.8V358.9M832.5 331.8V358.9M833.5 338.6V379.3M834.5 331.8V358.9M835.5 338.6V358.9M836.5 338.6V386.1M837.5 338.6V358.9M838.5 338.6V365.7M839.5 331.8V365.7M840.5 345.4V365.7M841.5 345.4V372.5M842.5 345.4V365.7M843.5 345.4V399.6M844.5 352.2V365.7M845.5 352.2V365.7M846.5 352.2V372.5M847.5 352.2V440.3M848.5 352.2V379.3M849.5 358.9V379.3M850.5 352.2V386.1M851.5 358.9V386.1M852.5 358.9V379.3M853.5 358.9V379.3M854.5 352.2V386.1M855.5 365.7V386.1M856.5 365.7V392.8M857.5 365.7V426.7M858.5 365.7V386.1M859.5 358.9V440.3M860.5 365.7V392.8M861.5 365.7V386.1M862.5 365.7V406.4M863.5 372.5V392.8M864.5 372.5V386.1M865.5 372.5V386.1M866.5 372.5V386.1M867.5 372.5V392.8M868.5 372.5V386.1M869.5 372.5V392.8M870.5 372.5V399.6M871.5 372.5V392.8M872.5 372.5V399.6M873.5 372.5V406.4M874.5 372.5V392.8M875.5 372.5V392.8M876.5 372.5V392.8M877.5 372.5V392.8M878.5 372.5V399.6M879.5 372.5V392.8M880.5 372.5V433.5M881.5 372.5V392.8M882.5 379.3V392.8M883.5 379.3V413.2M884.5 372.5V399.6M885.5 379.3V392.8M886.5 372.5V392.8M887.5 379.3V399.6M888.5 372.5V406.4M889.5 379.3V420.0M890.5 379.3V426.7M891.5 372.5V406.4M892.5 379.3V406.4M893.5 372.5V399.6M894.5 379.3V399.6M895.5 379.3V399.6M896.5 379.3V406.4M897.5 379.3V399.6M898.5 379.3V406.4M899.5 379.3V399.6M900.5 379.3V399.6M901.5 379.3V406.4M902.5 379.3V399.6M903.5 379.3V399.6M904.5 379.3V440.3M905.5 379.3V399.6M906.5 372.5V399.6M907.5 372.5V399.6M908.5 372.5V392.8M909.5 372.5V392.8M910.5 372.5V399.6M911.5 372.5V392.8M912.5 365.7V426.7M913.5 358.9V386.1M914.5 358.9V386.1M915.5 358.9V420.0M916.5 358.9V379.3M917.5 358.9V379.3M918.5 352.2V379.3M919.5 345.4V379.3M920.5 345.4V365.7M921.5 331.8V358.9M922.5 331.8V352.2M923.5 331.8V352.2M924.5 331.8V352.2M925.5 331.8V345.4M926.5 331.8V345.4M927.5 331.8V345.4M928.5 331.8V345.4M929.5 331.8V352.2M930.5 325.0V345.4M931.5 331.8V345.4M932.5 331.8V345.4M933.5 331.8V352.2M934.5 331.8V345.4M935.5 331.8V358.9M936.5 325.0V358.9M937.5 338.6V365.7M938.5 338.6V358.9M939.5 345.4V365.7M940.5 345.4V365.7M941.5 345.4V358.9M942.5 345.4V358.9M943.5 345.4V358.9M944.5 345.4V365.7M945.5 345.4V358.9M946.5 345.4V358.9M947.5 345.4V358.9M948.5 345.4V358.9M949.5 331.8V358.9M950.5 331.8V352.2M951.5 331.8V358.9M952.5 331.8V345.4M953.5 331.8V345.4M954.5 325.0V345.4M955.5 325.0V345.4M956.5 325.0V379.3M957.5 318.3V345.4M958.5 311.5V331.8M959.5 318.3V338.6M960.5 318.3V331.8M961.5 318.3V338.6M962.5 311.5V338.6M963.5 311.5V338.6M964.5 304.7V338.6M965.5 311.5V338.6M966.5 304.7V379.3M967.5 304.7V331.8M968.5 304.7V325.0M969.5 304.7V318.3M970.5 304.7V325.0M971.5 304.7V318.3M972.5 304.7V318.3M973.5 304.7V352.2M974.5 297.9V304.7M975.5 284.4V304.7M976.5 284.4V291.1M977.5 277.6V325.0M978.5 270.8V304.7M246.5 310.7V380.5M255.5 317.6V432.0M274.5 330.2V426.0M278.5 331.0V426.0M290.5 338.0V446.5M309.5 363.2V424.0M352.5 378.2V426.0M364.5 390.2V453.0M395.5 346.9V386.0M418.5 313.2V413.0M419.5 312.0V370.0M425.5 310.5V370.0M428.5 310.2V358.0M449.5 271.0V323.0M456.5 271.0V298.0M469.5 245.2V311.0M489.5 207.3V278.0M519.5 185.2V291.0M522.5 182.0V236.0M556.5 228.5V351.0M579.5 225.5V325.0M584.5 224.9V291.0M609.5 235.4V303.5M622.5 252.7V378.5M652.5 266.9V372.6M671.5 282.9V344.7M680.5 288.4V359.4M699.5 309.7V418.0M725.5 341.0V406.5M728.5 342.2V406.5M761.5 335.5V397.6M774.5 341.7V406.5M786.5 339.0V424.0M786.5 338.9V447.0M790.5 333.9V405.6M801.5 324.5V385.0M816.5 334.6V380.0M850.5 358.3V418.6M862.5 368.6V431.5M881.5 375.7V447.0M893.5 378.5V426.0M898.5 379.6V440.6M908.5 373.6V440.6M929.5 331.5V405.6M939.5 343.2V405.6M966.5 309.9V351.0M974.5 299.4V332.0M310.4 365.3V575M318.2 371.6V575M344.6 376.2V575M365 393.0V575M405.3 349.5V575M838 341.9V575" stroke="#ff00ff" stroke-width="1.1" fill="none"/><path d="M465 575 H978" stroke="#b82020" stroke-width="1.7" fill="none"/>
<path d="M1068 85 H1065.5 V743.5 H1192 V85 H1135" fill="none" stroke="#c8c8c8" stroke-width="1"/>
<path d="M1066.5 86 V742.5 H1191" fill="none" stroke="#fafafa" stroke-width="0.6"/>
<text x="1071.30" y="88.0" font-size="11" font-weight="normal" font-style="normal" fill="#1a1aa0" stroke="#1a1aa0" stroke-width="0.45" font-family='"Liberation Sans", sans-serif' textLength="60.50" lengthAdjust="spacingAndGlyphs" >Transponder [DT]</text>
<text x="1071.30" y="114.2" font-size="11" font-weight="normal" font-style="normal" fill="#2a2a2a" stroke="#2a2a2a" stroke-width="0.45" font-family='"Liberation Sans", sans-serif' textLength="39.18" lengthAdjust="spacingAndGlyphs" >Frequency:</text>
<text x="1127.00" y="114.2" font-size="11" font-weight="bold" font-style="normal" fill="#176617" stroke="#176617" stroke-width="0.2" font-family='"Liberation Sans", sans-serif' textLength="55.00" lengthAdjust="spacingAndGlyphs" >11211,701 MHz</text>
<text x="1071.30" y="148.6" font-size="11" font-weight="normal" font-style="normal" fill="#2a2a2a" stroke="#2a2a2a" stroke-width="0.45" font-family='"Liberation Sans", sans-serif' textLength="44.68" lengthAdjust="spacingAndGlyphs" >Polarization:</text>
<text x="1127.00" y="148.6" font-size="11" font-weight="bold" font-style="normal" fill="#176617" stroke="#176617" stroke-width="0.2" font-family='"Liberation Sans", sans-serif' textLength="25.99" lengthAdjust="spacingAndGlyphs" >Vertical</text>
<text x="1071.30" y="183.0" font-size="11" font-weight="normal" font-style="normal" fill="#2a2a2a" stroke="#2a2a2a" stroke-width="0.45" font-family='"Liberation Sans", sans-serif' textLength="46.38" lengthAdjust="spacingAndGlyphs" >Symbol Rate:</text>
<text x="1127.00" y="183.0" font-size="11" font-weight="bold" font-style="normal" fill="#176617" stroke="#176617" stroke-width="0.2" font-family='"Liberation Sans", sans-serif' textLength="50.62" lengthAdjust="spacingAndGlyphs" >2962,986 KS/s</text>
<text x="1071.30" y="217.4" font-size="11" font-weight="normal" font-style="normal" fill="#2a2a2a" stroke="#2a2a2a" stroke-width="0.45" font-family='"Liberation Sans", sans-serif' textLength="34.71" lengthAdjust="spacingAndGlyphs" >Standard:</text>
<text x="1127.00" y="217.4" font-size="11" font-weight="bold" font-style="normal" fill="#176617" stroke="#176617" stroke-width="0.2" font-family='"Liberation Sans", sans-serif' textLength="22.71" lengthAdjust="spacingAndGlyphs" >DVB-S</text>
<text x="1071.30" y="251.8" font-size="11" font-weight="normal" font-style="normal" fill="#2a2a2a" stroke="#2a2a2a" stroke-width="0.45" font-family='"Liberation Sans", sans-serif' textLength="44.70" lengthAdjust="spacingAndGlyphs" >Modulation:</text>
<text x="1127.00" y="251.8" font-size="11" font-weight="bold" font-style="normal" fill="#176617" stroke="#176617" stroke-width="0.2" font-family='"Liberation Sans", sans-serif' textLength="19.99" lengthAdjust="spacingAndGlyphs" >QPSK</text>
<text x="1127.00" y="286.2" font-size="11" font-weight="bold" font-style="normal" fill="#176617" stroke="#176617" stroke-width="0.2" font-family='"Liberation Sans", sans-serif' textLength="12.00" lengthAdjust="spacingAndGlyphs" >1/2</text>
<text x="1071.30" y="320.6" font-size="11" font-weight="normal" font-style="normal" fill="#2a2a2a" stroke="#2a2a2a" stroke-width="0.45" font-family='"Liberation Sans", sans-serif' textLength="28.21" lengthAdjust="spacingAndGlyphs" >RollOff:</text>
<text x="1127.00" y="320.6" font-size="11" font-weight="bold" font-style="normal" fill="#176617" stroke="#176617" stroke-width="0.2" font-family='"Liberation Sans", sans-serif' textLength="14.51" lengthAdjust="spacingAndGlyphs" >0.35</text>
<text x="1071.30" y="355.0" font-size="11" font-weight="normal" font-style="normal" fill="#2a2a2a" stroke="#2a2a2a" stroke-width="0.45" font-family='"Liberation Sans", sans-serif' textLength="18.29" lengthAdjust="spacingAndGlyphs" >Pilot:</text>
<text x="1127.00" y="355.0" font-size="11" font-weight="normal" font-style="normal" fill="#2a2a2a" stroke="#2a2a2a" stroke-width="0.45" font-family='"Liberation Sans", sans-serif' textLength="13.70" lengthAdjust="spacingAndGlyphs" >OFF</text>
<text x="1071.30" y="389.4" font-size="11" font-weight="normal" font-style="normal" fill="#2a2a2a" stroke="#2a2a2a" stroke-width="0.45" font-family='"Liberation Sans", sans-serif' textLength="35.72" lengthAdjust="spacingAndGlyphs" >Spectrum:</text>
<text x="1127.00" y="389.4" font-size="11" font-weight="bold" font-style="normal" fill="#176617" stroke="#176617" stroke-width="0.2" font-family='"Liberation Sans", sans-serif' textLength="29.80" lengthAdjust="spacingAndGlyphs" >Inverted</text>
<text x="1071.30" y="423.8" font-size="11" font-weight="normal" font-style="normal" fill="#2a2a2a" stroke="#2a2a2a" stroke-width="0.45" font-family='"Liberation Sans", sans-serif' textLength="41.70" lengthAdjust="spacingAndGlyphs" >Frame Type:</text>
<text x="1127.00" y="423.8" font-size="11" font-weight="normal" font-style="normal" fill="#2a2a2a" stroke="#2a2a2a" stroke-width="0.45" font-family='"Liberation Sans", sans-serif' textLength="43.61" lengthAdjust="spacingAndGlyphs" >Long Frame</text>
<text x="1071.30" y="458.2" font-size="11" font-weight="normal" font-style="normal" fill="#2a2a2a" stroke="#2a2a2a" stroke-width="0.45" font-family='"Liberation Sans", sans-serif' textLength="44.18" lengthAdjust="spacingAndGlyphs" >Code Mode:</text>
<text x="1127.00" y="458.2" font-size="11" font-weight="normal" font-style="normal" fill="#2a2a2a" stroke="#2a2a2a" stroke-width="0.45" font-family='"Liberation Sans", sans-serif' textLength="17.02" lengthAdjust="spacingAndGlyphs" >CCM</text>
<text x="1071.30" y="492.6" font-size="11" font-weight="normal" font-style="normal" fill="#2a2a2a" stroke="#2a2a2a" stroke-width="0.45" font-family='"Liberation Sans", sans-serif' textLength="43.49" lengthAdjust="spacingAndGlyphs" >Stream type:</text>
<text x="1127.00" y="492.6" font-size="11" font-weight="normal" font-style="normal" fill="#2a2a2a" stroke="#2a2a2a" stroke-width="0.45" font-family='"Liberation Sans", sans-serif' textLength="34.02" lengthAdjust="spacingAndGlyphs" >Transport</text>
<text x="1071.30" y="527.0" font-size="11" font-weight="normal" font-style="normal" fill="#2a2a2a" stroke="#2a2a2a" stroke-width="0.45" font-family='"Liberation Sans", sans-serif' textLength="15.71" lengthAdjust="spacingAndGlyphs" >ISSYI</text>
<text x="1127.00" y="527.0" font-size="11" font-weight="normal" font-style="normal" fill="#2a2a2a" stroke="#2a2a2a" stroke-width="0.45" font-family='"Liberation Sans", sans-serif' textLength="13.50" lengthAdjust="spacingAndGlyphs" >OFF</text>
<text x="1071.30" y="561.4" font-size="11" font-weight="normal" font-style="normal" fill="#2a2a2a" stroke="#2a2a2a" stroke-width="0.45" font-family='"Liberation Sans", sans-serif' textLength="17.09" lengthAdjust="spacingAndGlyphs" >NPD:</text>
<text x="1127.00" y="561.4" font-size="11" font-weight="normal" font-style="normal" fill="#2a2a2a" stroke="#2a2a2a" stroke-width="0.45" font-family='"Liberation Sans", sans-serif' textLength="13.50" lengthAdjust="spacingAndGlyphs" >OFF</text>
<text x="1071.30" y="595.8" font-size="11" font-weight="normal" font-style="normal" fill="#2a2a2a" stroke="#2a2a2a" stroke-width="0.45" font-family='"Liberation Sans", sans-serif' textLength="31.20" lengthAdjust="spacingAndGlyphs" >RF Level:</text>
<text x="1127.00" y="595.8" font-size="11" font-weight="bold" font-style="normal" fill="#176617" stroke="#176617" stroke-width="0.2" font-family='"Liberation Sans", sans-serif' textLength="29.80" lengthAdjust="spacingAndGlyphs" >-54 dBm</text>
<text x="1071.30" y="630.2" font-size="11" font-weight="normal" font-style="normal" fill="#2a2a2a" stroke="#2a2a2a" stroke-width="0.45" font-family='"Liberation Sans", sans-serif' textLength="28.22" lengthAdjust="spacingAndGlyphs" >BitRate:</text>
<text x="1127.00" y="630.2" font-size="11" font-weight="bold" font-style="normal" fill="#176617" stroke="#176617" stroke-width="0.2" font-family='"Liberation Sans", sans-serif' textLength="45.99" lengthAdjust="spacingAndGlyphs" >3,535 Mbit/s</text>
<text x="1071.30" y="664.6" font-size="11" font-weight="normal" font-style="normal" fill="#2a2a2a" stroke="#2a2a2a" stroke-width="0.45" font-family='"Liberation Sans", sans-serif' textLength="48.50" lengthAdjust="spacingAndGlyphs" >CarrierWidth:</text>
<text x="1127.00" y="664.6" font-size="11" font-weight="bold" font-style="normal" fill="#176617" stroke="#176617" stroke-width="0.2" font-family='"Liberation Sans", sans-serif' textLength="38.00" lengthAdjust="spacingAndGlyphs" >3,998 MHz</text>
<text x="1071.60" y="713.0" font-size="10.5" font-weight="normal" font-style="normal" fill="#2a2a2a" stroke="#2a2a2a" stroke-width="0.35" font-family='"Liberation Sans", sans-serif' textLength="25.41" lengthAdjust="spacingAndGlyphs" >MIS (0):</text>
<rect x="1128" y="700" width="50.4" height="17" fill="#f4f4f4" />
<text x="1130.00" y="712.5" font-size="10.5" font-weight="normal" font-style="normal" fill="#222" stroke="#222" stroke-width="0.35" font-family='"Liberation Sans", sans-serif' textLength="22.00" lengthAdjust="spacingAndGlyphs" >Single</text>
<path d="M1169 706 L1173 710 L1177 706" fill="none" stroke="#888" stroke-width="0.9"/>
<rect x="1066.5" y="752" width="125" height="22" rx="2" fill="#f8f8f8" stroke="#cfcfcf" stroke-width="1"/>
<rect x="1124" y="756" width="10" height="13" fill="#e0e0e0" stroke="#777" stroke-width="0.8"/>
<rect x="1124.5" y="759" width="9" height="3" fill="#2050b0"/><rect x="1124.5" y="764" width="9" height="1.2" fill="#777"/>
<rect x="6.3" y="784" width="88.7" height="17.299999999999955" fill="url(#gGray)"/>
<rect x="6.3" y="784" width="88.7" height="17.299999999999955" fill="url(#gGreen)"/>
<rect x="6.8" y="784.5" width="87.7" height="16.299999999999955" fill="none" stroke="#9a9a9a" stroke-width="1"/>
<text x="8.10" y="797.0" font-size="10.5" font-weight="normal" font-style="normal" fill="#111" stroke="#111" stroke-width="0.5" font-family='"Liberation Sans", sans-serif' textLength="26.41" lengthAdjust="spacingAndGlyphs" >Present</text>
<rect x="6.3" y="806" width="88.7" height="17.299999999999955" fill="url(#gGray)"/>
<rect x="6.3" y="806" width="88.7" height="17.299999999999955" fill="url(#gGreen)"/>
<rect x="6.8" y="806.5" width="87.7" height="16.299999999999955" fill="none" stroke="#9a9a9a" stroke-width="1"/>
<text x="8.10" y="819.0" font-size="10.5" font-weight="normal" font-style="normal" fill="#111" stroke="#111" stroke-width="0.5" font-family='"Liberation Sans", sans-serif' textLength="16.38" lengthAdjust="spacingAndGlyphs" >Lock</text>
<rect x="98" y="784" width="498" height="17.299999999999955" fill="url(#gGray)"/>
<rect x="98" y="784" width="50" height="17.299999999999955" fill="url(#gRed)"/>
<rect x="148" y="784" width="61" height="17.299999999999955" fill="url(#gYel)"/>
<rect x="98.5" y="784.5" width="497" height="16.299999999999955" fill="none" stroke="#9a9a9a" stroke-width="1"/>
<text x="99.80" y="797.0" font-size="10.5" font-weight="normal" font-style="normal" fill="#111" stroke="#111" stroke-width="0.5" font-family='"Liberation Sans", sans-serif' textLength="39.18" lengthAdjust="spacingAndGlyphs" >Level: 22%</text>
<rect x="98" y="806" width="498" height="17.299999999999955" fill="url(#gGray)"/>
<rect x="98" y="806" width="50" height="17.299999999999955" fill="url(#gRed)"/>
<rect x="148" y="806" width="199" height="17.299999999999955" fill="url(#gYel)"/>
<rect x="347" y="806" width="50.5" height="17.299999999999955" fill="url(#gLGreen)"/>
<rect x="98.5" y="806.5" width="497" height="16.299999999999955" fill="none" stroke="#9a9a9a" stroke-width="1"/>
<text x="99.80" y="819.0" font-size="10.5" font-weight="normal" font-style="normal" fill="#111" stroke="#111" stroke-width="0.5" font-family='"Liberation Sans", sans-serif' textLength="46.20" lengthAdjust="spacingAndGlyphs" >Quality: 60%</text>
<rect x="600" y="784" width="498.5" height="17.299999999999955" fill="url(#gGray)"/>
<rect x="600" y="784" width="107" height="17.299999999999955" fill="url(#gRed)"/>
<rect x="707" y="784" width="72" height="17.299999999999955" fill="url(#gYel)"/>
<rect x="600.5" y="784.5" width="497.5" height="16.299999999999955" fill="none" stroke="#9a9a9a" stroke-width="1"/>
<text x="601.80" y="797.0" font-size="10.5" font-weight="normal" font-style="normal" fill="#111" stroke="#111" stroke-width="0.5" font-family='"Liberation Sans", sans-serif' textLength="39.99" lengthAdjust="spacingAndGlyphs" >BER: 9,3E-3</text>
<rect x="600" y="806" width="498.5" height="17.299999999999955" fill="url(#gGray)"/>
<rect x="600" y="806" width="70.5" height="17.299999999999955" fill="url(#gRed)"/>
<rect x="670.5" y="806" width="42.0" height="17.299999999999955" fill="url(#gYel)"/>
<rect x="600.5" y="806.5" width="497.5" height="16.299999999999955" fill="none" stroke="#9a9a9a" stroke-width="1"/>
<text x="601.80" y="819.0" font-size="10.5" font-weight="normal" font-style="normal" fill="#111" stroke="#111" stroke-width="0.5" font-family='"Liberation Sans", sans-serif' textLength="144.02" lengthAdjust="spacingAndGlyphs" >SNR: 4,5 dB (Margin: 1,8 dB | Very Poor)</text>
<rect x="1102.6" y="784" width="88.40000000000009" height="17.299999999999955" fill="url(#gGray)"/>
<rect x="1102.6" y="784" width="88.40000000000009" height="17.299999999999955" fill="url(#gGreen)"/>
<rect x="1103.1" y="784.5" width="87.40000000000009" height="16.299999999999955" fill="none" stroke="#9a9a9a" stroke-width="1"/>
<text x="1104.40" y="797.0" font-size="10.5" font-weight="normal" font-style="normal" fill="#111" stroke="#111" stroke-width="0.5" font-family='"Liberation Sans", sans-serif' textLength="68.61" lengthAdjust="spacingAndGlyphs" >Input (~2,57 Mbps)</text>
<rect x="1102.6" y="806" width="88.40000000000009" height="17.299999999999955" fill="url(#gGray)"/>
<rect x="1102.6" y="806" width="88.40000000000009" height="17.299999999999955" fill="url(#gGreen)"/>
<rect x="1103.1" y="806.5" width="87.40000000000009" height="16.299999999999955" fill="none" stroke="#9a9a9a" stroke-width="1"/>
<text x="1104.40" y="819.0" font-size="10.5" font-weight="normal" font-style="normal" fill="#111" stroke="#111" stroke-width="0.5" font-family='"Liberation Sans", sans-serif' textLength="26.61" lengthAdjust="spacingAndGlyphs" >Sync TS</text>
<line x1="0" y1="829" x2="1200" y2="829" stroke="#bdbdbd" stroke-width="1" />
<line x1="392.7" y1="831" x2="392.7" y2="849" stroke="#888" stroke-width="1" />
<line x1="1188" y1="831" x2="1188" y2="849" stroke="#888" stroke-width="1" />
<text x="144.50" y="844.5" font-size="11.5" font-weight="normal" font-style="normal" fill="#111" stroke="#111" stroke-width="0.55" font-family='"Liberation Sans", sans-serif' textLength="104.98" lengthAdjust="spacingAndGlyphs" >Locked -&gt; Uptime: 32:39:25</text>
<text x="542.70" y="844.5" font-size="11.5" font-weight="normal" font-style="normal" fill="#111" stroke="#111" stroke-width="0.55" font-family='"Liberation Sans", sans-serif' textLength="102.30" lengthAdjust="spacingAndGlyphs" >SYNC 12 | TEI 5180 | CC 721</text>
<text x="917.00" y="844.5" font-size="11.5" font-weight="normal" font-style="normal" fill="#111" stroke="#111" stroke-width="0.55" font-family='"Liberation Sans", sans-serif' textLength="146.48" lengthAdjust="spacingAndGlyphs" >Best signal: 5,8 dB (2025-03-08 07:22)</text>
<path d="M1196 841 h1 M1193 844 h1 M1196 844 h1 M1190 847 h1 M1193 847 h1 M1196 847 h1" stroke="#888" stroke-width="1.5"/>
<path d="M972.8 264.8 H986.6 M979.7 256 V273" stroke="#111" stroke-width="2"/>
<rect x="982" y="279" width="120" height="16.5" fill="#000" opacity="0.18"/>
<rect x="980.5" y="277" width="119.5" height="16" fill="#fbfbfb" stroke="#dadada" stroke-width="1"/>
<text x="984.40" y="288.8" font-size="11" font-weight="normal" font-style="normal" fill="#333" stroke="#333" stroke-width="0.3" font-family='"Liberation Sans", sans-serif' textLength="111.08" lengthAdjust="spacingAndGlyphs" >2025-03-09 03.39.17, value: 4,5</text></svg>
</body></html>
